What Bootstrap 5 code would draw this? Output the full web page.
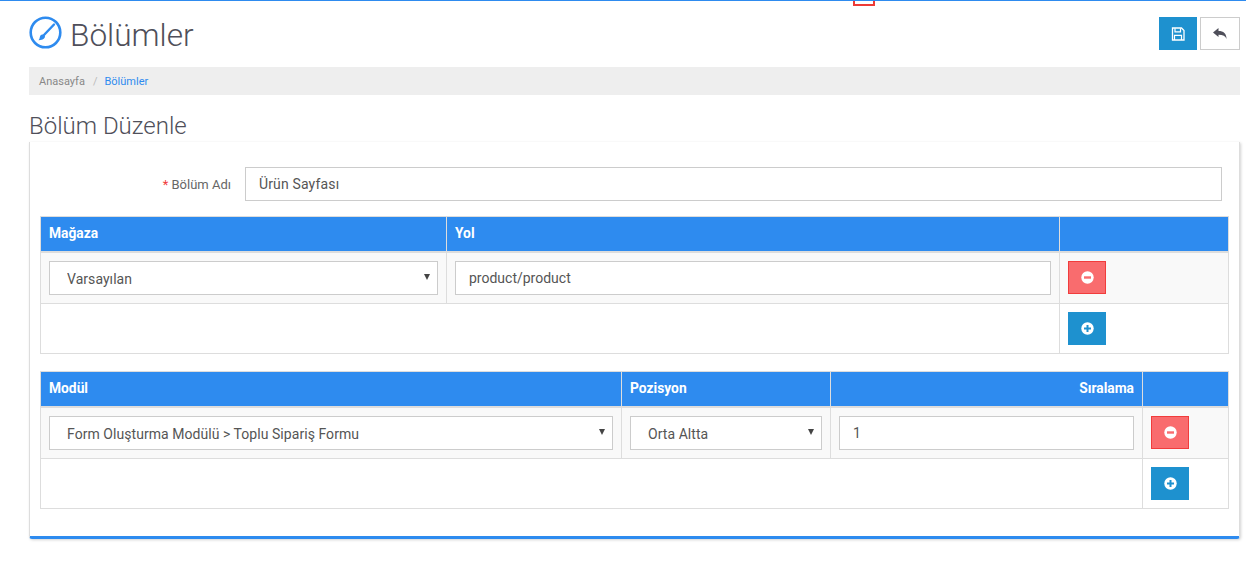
<!DOCTYPE html>
<html lang="tr">
<head>
<meta charset="utf-8">
<title>Bölümler</title>
<link href="https://cdn.jsdelivr.net/npm/bootstrap@5.3.0/dist/css/bootstrap.min.css" rel="stylesheet">
<style>
html,body{height:568px;overflow:hidden}
body{font-family:Roboto,"Liberation Sans",sans-serif;color:#555;background:#fff;border-top:1px solid #2e8bef;font-size:14px;position:relative}
.red-tab{position:absolute;left:853px;top:0;width:22px;height:5px;border:2px solid #ee3a35;border-top:0;background:#fff}
.page-wrap{padding:0 6px 0 29px}
.head-row{height:66px;padding-top:15px}
.page-title{font-size:31.6px;font-weight:300;line-height:40px;color:#4f4f5a;margin:0 0 0 7px}
.ico-round{width:34px;height:34px;display:block}
.head-btns{padding-top:1px}
.act-btn{width:38px;height:33px;padding:0;border-radius:0;display:flex;align-items:center;justify-content:center;border:0}
.act-save,.act-add{background:#1e91cf}
.act-save:hover,.act-add:hover{background:#1e91cf}
.act-back{background:#fff;border:1px solid #ccc;width:40px;margin-left:3px}
.act-del{background:#f96c6e;border:1px solid #f13c3c}
.act-del:hover{background:#f96c6e}
.crumb-bar{height:28px;background:#eee;padding:3px 10px 0;font-size:11px;margin:0;align-items:center;display:flex}
.crumb-bar .breadcrumb-item{color:#888}
.crumb-bar .breadcrumb-item a{color:#888;text-decoration:none}
.crumb-bar .breadcrumb-item.active{color:#2e8bef}
.crumb-bar .breadcrumb-item+.breadcrumb-item{padding-left:8px}
.crumb-bar .breadcrumb-item+.breadcrumb-item::before{padding-right:7px;color:#bbb}
.sub-title{font-size:24px;font-weight:300;line-height:28px;color:#4f4f5a;margin:17px 0 0}
.panel-box{margin-top:2px;height:397px;padding:25px 10px 0;border-left:1px solid #ddd;border-right:1px solid #ddd;border-bottom:3px solid #2e8bef;box-shadow:1px 1px 3px rgba(0,0,0,.18);border-radius:0 0 3px 3px}
.name-row{height:34px;margin-bottom:15px;padding-right:7px}
.name-label{width:205px;padding:1px 14px 0 0;text-align:right;font-size:13px;color:#666;line-height:34px;flex:none;margin:0}
.name-label span{color:#f13c3c}
.flat-input{border-radius:0;border:1px solid #ccc;height:34px;padding:0 13px;font-size:14px;color:#555;box-shadow:none}
.name-input{letter-spacing:.15px}
.flat-select{border-radius:0;border:1px solid #ccc;height:34px;padding:3px 30px 0 17px;font-size:14px;color:#555;background-size:0;background-image:none;letter-spacing:.05px}
.sel-wrap{position:relative}
.sel-wrap::after{content:"";position:absolute;right:8px;top:13px;border:3px solid transparent;border-top:6px solid #444;border-bottom:0;pointer-events:none}
.grid-tbl{table-layout:fixed;width:1188px;margin:0;border-collapse:collapse;border:1px solid #ddd;font-size:14px}
.grid-tbl th{background:#2e8bef;color:#fff;font-weight:700;font-size:13.8px;height:35px;padding:1px 8px 0;border:1px solid #ddd;border-bottom:2px solid #ddd;vertical-align:middle;box-shadow:none;line-height:1}
.grid-tbl td{padding:8px;border:1px solid #ddd;vertical-align:top;background:#fff;box-shadow:none}
.grid-tbl tbody tr:first-child td{background:#f9f9f9;height:51px}
.grid-tbl tbody tr:last-child td{height:50px}
.second-tbl{margin-top:17px}
.second-tbl th{height:36px}
.c-w406{width:406px}.c-w613{width:613px}.c-w169{width:169px}
.c-w581{width:581px}.c-w209{width:209px}.c-w312{width:312px}.c-w86{width:86px}
</style>
</head>
<body>
<div class="red-tab"></div>
<div class="page-wrap">
  <div class="d-flex justify-content-between head-row">
    <div class="d-flex align-items-start">
      <svg class="ico-round" viewBox="0 0 34 34" fill="none"><circle cx="16.5" cy="16.5" r="14.8" stroke="#2e8bef" stroke-width="2.6"/><path d="M25 8.5 14.5 19.5" stroke="#2e8bef" stroke-width="2.4" stroke-linecap="round"/><path d="M13.5 18.5c2 .3 2.8 1.5 2.4 2.8-.7 2-3.4 2.9-6.4 2.9 1.2-1 1-2 1.5-3.6.4-1.200 1.300-2.200 2.500-2.100z" fill="#2e8bef"/></svg>
      <h1 class="page-title">Bölümler</h1>
    </div>
    <div class="d-flex head-btns">
      <button class="btn act-btn act-save" type="button" aria-label="Kaydet"><svg width="14" height="14" viewBox="0 0 14 14" fill="none"><path d="M1.500 1h9l2.500 2.500v9.500h-11.500z" stroke="#fff" stroke-width="1.300"/><path d="M4 1.200v3.600h5.500V1.200M3.500 13V8.300h7V13" stroke="#fff" stroke-width="1.200"/></svg></button>
      <button class="btn act-btn act-back" type="button" aria-label="Geri"><svg width="14" height="12" viewBox="0 0 14 12"><path d="M0 4.500 5.500 0v3c5 0 8 2.500 8 8-1-3-3.500-4.300-8-4.300V9z" fill="#4f4f5a"/></svg></button>
    </div>
  </div>
  <nav aria-label="breadcrumb"><ol class="breadcrumb crumb-bar"><li class="breadcrumb-item"><a href="#">Anasayfa</a></li><li class="breadcrumb-item active">Bölümler</li></ol></nav>
  <h3 class="sub-title">Bölüm Düzenle</h3>
  <div class="panel-box">
    <div class="d-flex name-row">
      <label class="name-label"><span>*</span> Bölüm Adı</label>
      <input class="form-control flat-input name-input" value="Ürün Sayfası">
    </div>
    <table class="table grid-tbl">
      <colgroup><col class="c-w406"><col class="c-w613"><col class="c-w169"></colgroup>
      <thead><tr><th>Mağaza</th><th>Yol</th><th></th></tr></thead>
      <tbody>
        <tr><td><div class="sel-wrap"><select class="form-select flat-select"><option>Varsayılan</option></select></div></td><td><input class="form-control flat-input" value="product/product"></td><td><button class="btn act-btn act-del" type="button" aria-label="Sil"><svg width="13" height="13" viewBox="0 0 13 13"><circle cx="6.500" cy="6.500" r="6.200" fill="#fff"/><rect x="3" y="5.300" width="7" height="2.400" fill="#f96c6e"/></svg></button></td></tr>
        <tr><td colspan="2"></td><td><button class="btn act-btn act-add" type="button" aria-label="Ekle"><svg width="13" height="13" viewBox="0 0 13 13"><circle cx="6.500" cy="6.500" r="6.200" fill="#fff"/><path d="M3 5.500h2.500V3h2v2.500H10v2H7.500V10h-2V7.500H3z" fill="#1e91cf"/></svg></button></td></tr>
      </tbody>
    </table>
    <table class="table grid-tbl second-tbl">
      <colgroup><col class="c-w581"><col class="c-w209"><col class="c-w312"><col class="c-w86"></colgroup>
      <thead><tr><th>Modül</th><th>Pozisyon</th><th class="text-end">Sıralama</th><th></th></tr></thead>
      <tbody>
        <tr><td><div class="sel-wrap"><select class="form-select flat-select"><option>Form Oluşturma Modülü &gt; Toplu Sipariş Formu</option></select></div></td><td><div class="sel-wrap"><select class="form-select flat-select"><option>Orta Altta</option></select></div></td><td><input class="form-control flat-input" value="1"></td><td><button class="btn act-btn act-del" type="button" aria-label="Sil"><svg width="13" height="13" viewBox="0 0 13 13"><circle cx="6.500" cy="6.500" r="6.200" fill="#fff"/><rect x="3" y="5.300" width="7" height="2.400" fill="#f96c6e"/></svg></button></td></tr>
        <tr><td colspan="3"></td><td><button class="btn act-btn act-add" type="button" aria-label="Ekle"><svg width="13" height="13" viewBox="0 0 13 13"><circle cx="6.500" cy="6.500" r="6.200" fill="#fff"/><path d="M3 5.500h2.500V3h2v2.500H10v2H7.500V10h-2V7.500H3z" fill="#1e91cf"/></svg></button></td></tr>
      </tbody>
    </table>
  </div>
</div>
<script src="https://cdn.jsdelivr.net/npm/bootstrap@5.3.0/dist/js/bootstrap.bundle.min.js"></script>
</body>
</html>
